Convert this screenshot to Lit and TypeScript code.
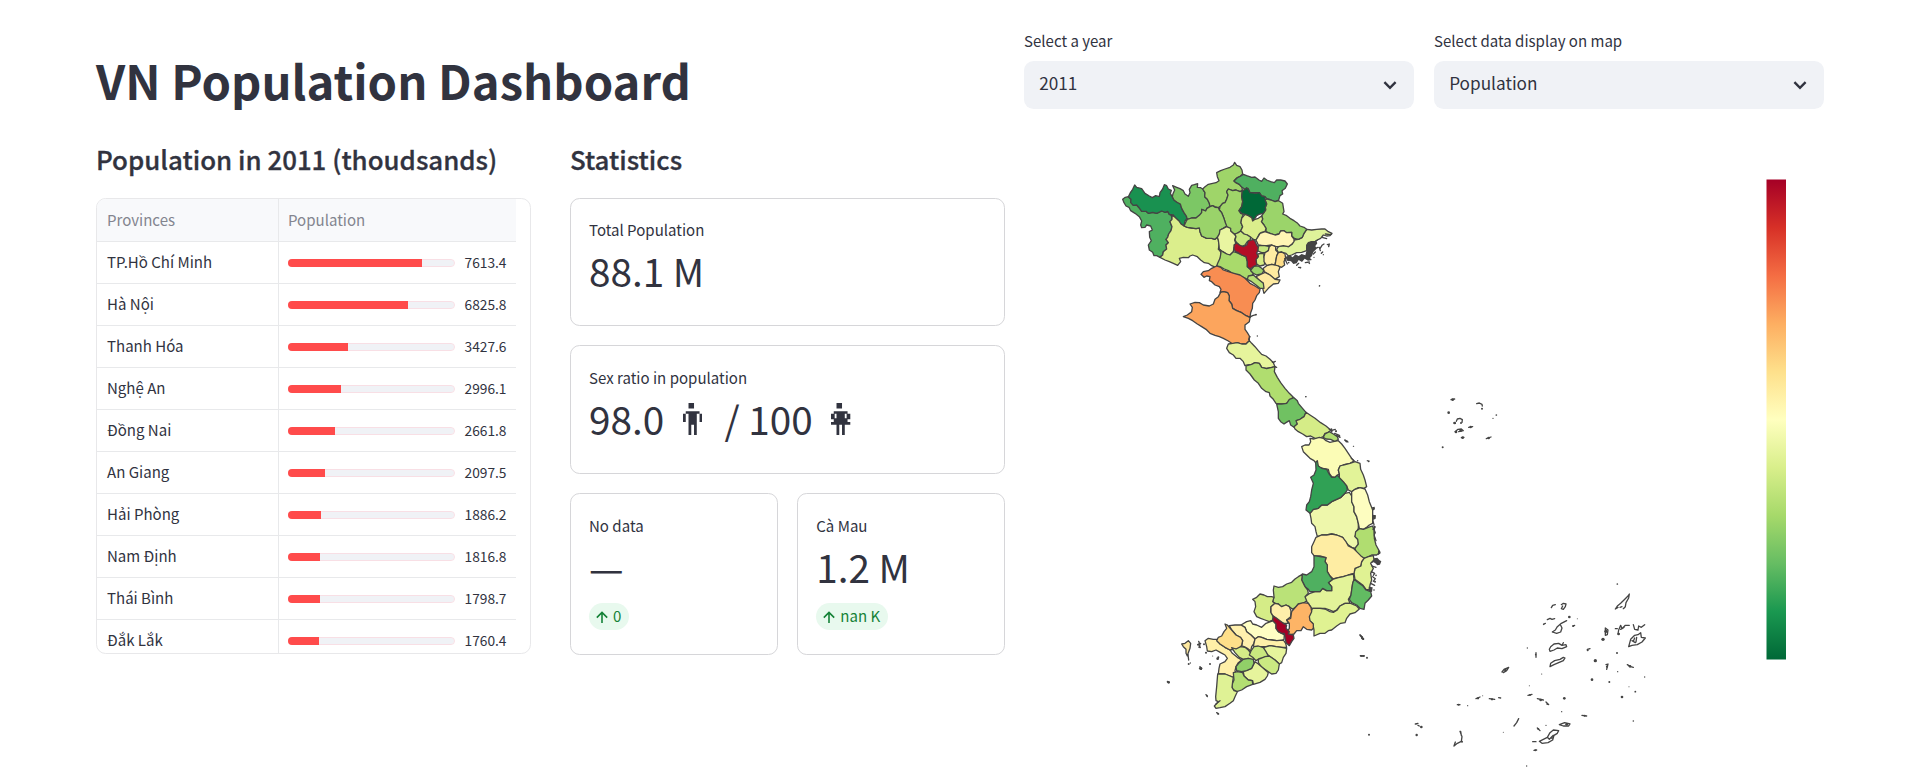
import { LitElement, html, css, svg } from "lit";
import { customElement, property } from "lit/decorators.js";

const PROVINCES: [string, number][] = [
  ["TP.Hồ Chí Minh", 7613.4],
  ["Hà Nội", 6825.8],
  ["Thanh Hóa", 3427.6],
  ["Nghệ An", 2996.1],
  ["Đồng Nai", 2661.8],
  ["An Giang", 2097.5],
  ["Hải Phòng", 1886.2],
  ["Nam Định", 1816.8],
  ["Thái Bình", 1798.7],
  ["Đắk Lắk", 1760.4],
];
const SCALE_MAX = 9500;

type Shape = [fill: string, points: string];
interface Sheet {
  x: number;
  y: number;
  shapes: Shape[];
  lines?: string;
  dots?: [number, number, number][];
  solid?: string;
}

/* Each sheet is drawn at three units per pixel from its own origin. */
const SHEETS: Sheet[] = [
  {
    x: 1110,
    y: 150,
    shapes: [
      ["#dff29a", "582,250 590,238 605,240 620,238 635,237 645,237 655,245 666,250 660,257 650,258 640,255 632,265 622,270 615,275 605,275 595,280 590,290 590,302 575,307 560,308 545,315 535,318 528,310 515,306 505,308 500,298 505,290 520,287 535,290 547,282 552,270 565,268 577,262"],
      ["#4fb060", "38,148 46,142 55,140 63,148 62,157 70,166 80,165 88,174 95,184 108,184 115,190 128,187 140,190 155,183 166,187 173,184 178,193 184,196 186,208 180,215 186,230 183,242 176,252 173,262 168,268 175,278 168,285 170,297 160,305 158,315 150,322 140,317 132,317 128,307 118,300 115,285 124,272 119,262 118,245 127,240 122,228 110,225 105,232 95,233 92,225 95,213 88,200 75,190 62,182 57,172 48,168 42,158"],
      ["#199150", "74,105 80,112 95,116 105,130 118,138 127,143 137,137 148,140 150,128 158,117 163,104 170,107 175,117 184,121 181,131 187,140 192,150 200,156 211,162 215,175 222,188 229,198 231,205 225,213 222,228 213,222 207,213 198,206 190,195 178,193 173,184 166,187 155,183 140,190 128,187 115,190 108,184 95,184 88,174 80,165 70,166 62,157 63,148 55,140 61,128 68,118"],
      ["#dbee8c", "186,196 195,202 207,213 213,222 222,228 232,232 245,234 258,236 268,234 270,245 275,258 290,265 305,265 315,268 322,262 325,270 327,285 325,298 333,305 332,320 328,335 323,345 317,352 305,347 295,340 283,338 272,330 262,320 248,315 240,318 235,323 220,322 208,325 212,335 203,346 190,340 178,335 165,330 150,322 158,315 160,305 170,297 168,285 175,278 168,268 173,262 176,252 183,242 186,230 180,215 186,208"],
      ["#7cc765", "188,107 200,112 210,116 220,122 225,132 235,139 240,128 238,118 245,106 253,104 263,101 262,112 272,113 278,117 285,128 284,140 292,148 298,160 300,170 291,175 287,183 275,178 275,188 268,196 258,204 245,204 232,208 229,198 222,188 215,175 211,162 200,156 192,150 187,140 189,131 194,120"],
      ["#9fd569", "278,117 285,110 295,103 308,100 318,98 327,92 322,80 320,68 332,62 345,57 360,52 370,45 374,37 380,46 390,50 396,60 398,72 390,80 380,84 372,93 378,98 388,103 396,112 397,122 390,125 378,120 368,122 355,117 350,125 354,135 350,148 345,158 338,160 330,170 325,173 315,170 308,167 300,170 298,160 292,148 284,140 285,128"],
      ["#4fb060", "372,93 382,83 390,79 400,73 410,77 425,82 435,81 447,90 455,94 462,84 470,90 482,95 493,98 500,90 512,90 525,93 532,102 526,115 516,122 518,132 510,137 506,150 495,155 483,150 472,147 465,140 455,138 448,128 438,128 420,128 414,115 405,118 396,112 388,103 378,98"],
      ["#9fd569", "355,117 368,122 378,120 390,125 397,122 395,140 398,155 395,170 387,182 392,190 400,193 395,205 393,218 398,230 392,243 382,250 372,252 362,243 358,235 348,230 345,215 340,200 335,188 328,180 330,170 338,160 345,158 350,148 354,135 350,125"],
      ["#9ad36a", "300,170 308,167 315,172 325,173 328,180 335,188 340,200 345,215 350,228 340,235 330,240 328,252 322,262 315,268 305,265 290,265 275,258 270,245 268,234 258,236 245,234 232,232 222,228 228,215 232,208 245,204 258,204 268,196 275,188 275,178 287,183 291,175"],
      ["#9bd46a", "465,150 472,147 483,150 495,155 506,152 518,160 520,172 522,185 518,192 530,197 540,205 552,212 563,220 570,228 582,232 590,238 582,250 577,262 565,268 553,265 545,258 545,247 530,248 522,242 512,243 507,252 495,255 480,250 468,245 468,235 462,225 454,215 458,207 455,198 460,190 467,180 466,172 470,162"],
      ["#006837", "397,122 405,118 410,113 416,120 420,128 438,130 448,128 455,138 465,140 466,152 470,162 466,172 467,180 460,190 450,192 440,197 435,205 428,213 425,203 415,197 405,193 395,190 387,182 395,170 398,155 395,140"],
      ["#e9f5a1", "350,230 362,235 362,243 372,252 378,258 374,270 378,282 372,292 370,305 360,315 350,312 338,305 328,298 327,285 325,270 322,262 328,252 330,240 340,235"],
      ["#dbee8c", "405,193 415,197 425,203 428,213 435,208 445,205 455,198 458,207 454,215 462,225 468,235 465,245 455,247 448,252 443,262 438,270 430,268 422,262 412,255 402,252 392,243 398,230 393,218 395,205"],
      ["#fff5b5", "438,270 443,262 450,250 465,245 480,250 495,255 507,252 512,243 522,242 530,248 545,247 545,258 552,267 552,275 545,283 535,290 520,287 505,290 497,290 485,285 470,287 455,287 445,285"],
      ["#a9da6b", "328,298 338,305 350,312 360,315 370,305 380,308 395,315 408,320 412,335 412,350 420,357 425,362 430,372 423,380 412,388 400,382 385,378 370,372 355,362 343,357 330,350 320,348 323,340 330,325 333,308"],
      ["#c9e87f", "375,252 385,248 392,243 402,252 412,255 422,262 420,272 412,275 405,285 395,290 388,285 380,278 375,270 378,260"],
      ["#c4e67d", "442,290 450,286 465,287 478,290 475,302 468,308 455,308 444,303"],
      ["#d5ec85", "443,312 455,310 462,312 462,322 467,332 462,345 450,348 440,342 438,328 445,320"],
      ["#feeda3", "478,290 485,285 497,290 497,300 505,308 500,318 497,335 495,345 485,343 470,347 462,335 462,320 465,308 475,302"],
      ["#fddd88", "505,308 515,306 525,312 527,325 522,335 524,345 515,352 505,348 495,345 497,335 500,318"],
      ["#feeaa0", "470,347 485,343 495,345 505,348 510,352 505,365 508,380 495,388 485,380 475,372 462,365 460,355"],
      ["#9ad36a", "425,357 432,348 445,348 455,355 462,362 455,372 440,375 430,370 422,362"],
      ["#feeaa0", "455,372 465,367 480,375 495,388 510,390 505,400 490,402 475,415 462,430 458,415 460,400 448,392 438,380"],
      ["#b7e075", "415,378 430,375 445,388 460,400 462,415 450,415 438,405 425,395 412,388"],
      ["#b30d26", "372,285 380,278 388,285 400,290 410,285 415,272 425,270 430,268 436,275 440,285 445,292 443,302 440,310 445,320 438,328 440,345 430,350 420,357 412,350 412,335 408,320 395,315 385,308 377,305 372,298"],
    ],
    solid:
      "M527,320L540,316 548,322 556,313 566,318 575,312 586,316 590,300 588,285 594,276 604,274 612,276 618,270 622,280 616,288 620,296 610,306 606,318 600,324 606,330 594,332 584,326 576,336 566,330 560,340 550,342 543,334 530,332Z",
    lines: "M630,296L636,286 642,282M634,310L638,306M652,284L658,282 656,290M646,252L662,254M636,262L650,266M560,346L566,340M586,338L598,336M524,326L532,342M566,352L572,353M628,292L631,302M614,296L624,292M610,312L616,306",
    dots: [[629, 407, 2], [640, 314, 2], [571, 353, 2.4], [656, 288, 2], [598, 340, 2.5], [536, 338, 2.5], [612, 322, 2], [622, 270, 2], [664, 252, 2.5]],
  },
  {
    x: 1160,
    y: 230,
    shapes: [
      ["#f88d52", "123,133 130,125 145,122 155,115 170,108 182,112 190,120 205,125 222,130 240,135 255,145 270,160 285,168 300,178 298,188 290,197 285,210 278,220 277,235 272,248 270,262 258,257 245,248 230,242 218,235 215,222 207,212 208,198 203,188 190,185 180,187 183,178 178,170 165,165 155,155 148,152 150,140 140,138 132,142"],
      ["#fca55d", "182,187 190,185 203,188 208,198 207,212 215,222 218,235 230,242 245,248 258,257 270,262 268,275 255,285 255,298 262,308 268,318 268,332 258,342 245,342 232,338 218,342 205,333 190,325 178,320 165,316 150,310 138,298 125,290 112,282 98,272 85,265 70,260 82,255 95,245 97,232 90,222 105,217 118,218 130,225 148,228 160,222 165,208 175,200"],
      ["#e6f49c", "205,342 218,340 232,338 245,342 258,342 268,332 275,340 285,350 295,362 305,373 318,378 330,388 340,398 345,410 335,412 318,415 305,412 298,400 285,398 275,403 262,405 255,407 250,395 240,385 228,385 220,375 208,368 200,355"],
      ["#b0dd6f", "258,408 275,403 285,398 298,400 305,412 320,416 345,410 343,425 352,442 362,458 375,475 388,490 400,502 390,510 385,518 372,522 360,522 348,520 340,508 330,498 328,488 318,485 305,475 295,460 283,450 270,432 258,420"],
      ["#70c162", "350,522 365,522 380,520 388,508 402,503 412,512 415,520 425,532 438,547 432,560 420,568 410,572 412,582 402,592 392,585 388,572 378,578 372,582 362,575 355,565 355,545"],
      ["#d5ec87", "438,547 450,555 465,565 482,578 498,588 512,600 505,608 495,610 490,620 478,625 465,625 452,618 440,620 428,612 415,605 405,597 402,590 412,582 408,572 420,568 432,560"],
      ["#b0dd70", "495,612 508,605 520,612 532,620 535,628 525,635 512,628 498,627 490,622"],
    ],
    lines: "M268,262L278,257 288,254M270,320L266,328M340,398L346,394M344,410L350,412M508,598L516,602M530,616L540,622",
    dots: [[478, 168, 2], [292, 318, 2.2], [288, 254, 2.5], [437, 500, 2], [528, 603, 2], [515, 605, 2.5], [560, 634, 3.5], [556, 631, 2.5], [538, 618, 3], [580, 649, 1.6], [338, 396, 3]],
  },
  {
    x: 1240,
    y: 390,
    shapes: [
      ["#fbfcb6", "210,145 222,147 238,142 250,145 258,152 270,157 280,155 295,152 305,162 315,175 325,190 335,205 342,213 330,220 310,225 300,228 295,240 298,252 285,262 275,260 268,250 265,238 250,235 238,232 230,222 222,212 210,205 200,195 190,185 185,170 195,165 207,165 212,155"],
      ["#e2f398", "300,228 310,225 330,220 345,215 360,220 362,238 370,255 375,270 380,290 372,295 355,293 345,298 335,305 325,300 320,288 308,275 298,265 298,252 295,240"],
      ["#eef7ab", "210,370 220,358 235,355 245,345 262,345 275,335 290,328 303,322 315,310 328,307 335,318 335,335 342,350 342,365 350,380 355,400 355,415 350,425 345,440 355,450 355,465 345,475 335,472 325,465 315,455 308,442 290,435 275,432 260,435 245,435 232,440 228,425 225,410 215,400 213,385"],
      ["#30a155", "227,217 232,212 235,228 245,235 260,238 266,250 275,262 285,262 292,255 300,265 310,275 320,288 322,300 315,310 303,322 290,328 275,335 262,345 245,345 235,355 220,358 210,370 198,360 200,345 208,335 212,320 215,300 220,280 212,262 222,255 228,240"],
      ["#fdfdc0", "335,305 345,298 360,293 375,297 383,315 388,335 392,345 398,360 398,380 398,400 388,405 380,412 370,418 358,415 355,400 350,380 342,365 342,350 335,335 335,318"],
      ["#b0dd70", "347,425 358,416 370,418 385,412 397,408 403,420 403,445 408,465 420,487 410,495 395,495 380,503 370,505 360,498 348,485 345,475 355,462 353,448 345,440"],
      ["#e0f293", "372,505 385,500 400,497 402,510 392,520 400,535 392,550 395,570 390,585 388,600 378,598 368,585 355,575 345,568 342,550 345,535 362,528 365,515"],
      ["#feeda3", "228,442 245,435 260,435 275,432 290,435 308,442 318,455 325,468 340,475 350,485 362,497 372,505 365,515 362,528 345,535 342,550 325,555 310,560 295,563 280,567 270,558 262,545 262,525 255,515 258,503 240,498 222,497 215,488 215,470 222,455"],
      ["#e3f399", "340,552 342,568 338,580 335,600 333,615 325,628 330,640 315,640 300,648 290,660 280,665 270,660 255,655 240,655 225,655 215,655 205,640 193,628 195,620 210,610 225,605 240,605 248,595 260,602 275,602 275,590 265,578 280,567 295,563 310,560 325,555"],
      ["#4fb060", "222,497 240,500 258,503 255,515 262,525 262,545 270,558 278,568 265,578 275,590 275,602 260,602 248,595 240,605 225,605 210,605 205,598 195,590 185,570 187,552 200,555 215,545 222,530 222,512"],
      ["#62bb62", "342,568 355,578 368,587 378,600 392,605 395,618 385,630 375,640 372,658 360,655 350,645 335,638 328,628 333,615 335,600 338,580"],
      ["#e0f292", "218,655 240,655 255,657 270,665 280,667 292,660 300,648 315,640 332,640 350,648 358,657 345,668 330,672 320,685 315,698 302,700 290,708 275,720 265,722 255,730 240,730 222,738 222,720 218,700 205,690 208,675"],
      ["#bae278", "100,600 102,588 115,592 128,590 140,582 155,577 165,567 175,560 187,553 185,570 195,590 203,600 205,610 195,620 200,632 190,640 175,642 168,650 158,658 148,650 138,645 125,650 115,642 105,640 98,635 102,620"],
      ["#d5ec87", "38,628 50,622 60,612 72,615 82,620 95,620 102,622 98,635 105,640 93,650 92,665 100,680 98,690 88,695 75,690 62,685 50,680 42,665 47,650 45,635"],
      ["#feefaa", "93,650 105,640 115,642 125,650 138,645 148,650 153,662 152,680 140,690 145,700 132,700 118,695 108,685 100,680 93,668"],
      ["#fdb466", "175,642 190,638 205,640 213,652 215,665 208,680 210,692 220,702 220,715 215,720 200,718 190,710 183,722 170,722 162,732 150,735 138,730 148,715 148,700 140,690 152,685 155,665"],
    ],
    solid:
      "M402,505L412,503 418,510 424,514 420,524 412,526 406,520 400,516Z M396,352L404,350 405,358 398,362Z M398,374L408,376 407,386 399,390Z M400,404L408,410 404,418 408,428 401,440Z M386,590L398,592 396,606 386,604Z M414,480L422,490 414,496Z",
    lines: "M398,390L402,404M404,440L408,452M396,528L408,532M394,545L404,550 400,556M398,560L406,566 400,574M392,580L404,586M398,516L404,508M272,122L286,118M284,130L298,136M314,150L324,156M334,205L342,212",
    dots: [[198, 20, 2], [386, 214, 3], [382, 212, 2], [341, 169, 1.5], [400, 418, 3], [405, 575, 3], [408, 556, 2.5], [366, 741, 3], [369, 746, 3], [288, 124, 3], [274, 118, 3], [402, 600, 2.5], [353, 212, 2.2]],
  },
  {
    x: 1150,
    y: 550,
    shapes: [
      ["#fefec4", "273,225 290,215 302,212 308,222 320,225 335,232 348,220 362,215 370,212 378,222 378,235 385,245 395,250 403,255 402,268 395,275 380,272 365,270 350,268 335,262 325,260 315,267 303,255 290,245 285,232"],
      ["#fff0ae", "238,227 255,225 273,225 285,232 290,245 303,255 315,267 312,280 305,290 302,303 292,295 282,290 275,288 278,272 270,262 258,255 245,240"],
      ["#fff0a8", "165,272 175,265 190,268 203,268 210,282 225,292 240,300 247,310 262,322 275,330 265,338 258,350 255,362 258,372 250,382 240,378 225,372 205,372 207,355 210,342 225,335 232,325 225,315 212,308 198,300 185,305 172,303 170,290"],
      ["#fedf8a", "225,222 232,225 245,240 258,255 272,262 278,272 275,285 268,297 255,297 240,300 225,292 210,282 200,272 205,262 215,258 222,245 230,235"],
      ["#fef0a9", "315,267 325,260 335,262 350,268 365,270 380,272 400,270 407,280 410,292 395,292 378,290 362,287 348,290 335,290 320,292 310,288"],
      ["#e6f49c", "340,293 360,287 378,290 395,292 410,295 408,310 400,322 395,338 388,342 375,330 360,320 348,310"],
      ["#d5ec87", "245,293 258,297 272,290 285,292 295,300 303,310 315,325 308,330 295,325 280,328 268,322 255,308"],
      ["#c9e87f", "303,303 312,290 325,288 340,293 348,305 355,318 345,325 330,325 318,332 308,322 298,315"],
      ["#cbe982", "325,328 345,320 358,318 375,330 388,342 385,360 378,370 365,372 350,362 335,352 325,338"],
      ["#e6f49c", "280,365 292,360 305,355 315,335 325,342 340,355 355,368 352,378 345,388 330,397 310,403 308,392 295,390 282,378"],
      ["#91d068", "258,350 268,338 280,328 295,325 310,328 312,340 305,355 290,362 275,365 260,362"],
      ["#b3de72", "250,368 262,365 278,368 282,378 295,390 307,392 308,403 290,410 275,420 260,425 248,418 245,405 252,390"],
      ["#dff295", "203,372 225,372 240,378 250,382 248,395 246,412 252,422 262,425 255,440 250,452 240,460 225,470 210,473 198,475 193,468 205,455 198,452 197,440 200,410"],
      ["#a50026", "370,198 380,205 390,212 400,220 410,225 408,235 418,245 415,252 430,255 432,265 425,275 418,287 408,278 405,260 403,250 395,250 385,245 378,235 378,222 368,212"],
      ["#fee9a0", "95,282 105,280 115,272 122,280 120,295 115,308 112,318 108,310 108,298 100,290"],
    ],
    lines: "M114,314L116,330M146,274L150,284 147,292M143,284L152,280M630,256L640,268M632,318L642,318M198,462L210,452M150,350L154,358M168,434L172,440M200,488L206,492",
    dots: [[56, 397, 4], [53, 395, 3], [116, 342, 3], [121, 339, 2], [152, 355, 5], [180, 342, 3], [168, 308, 3], [188, 318, 1.6], [203, 326, 4], [205, 322, 3], [171, 437, 2.4], [204, 491, 3], [640, 267, 3], [633, 257, 2], [634, 318, 2], [642, 317, 2], [651, 323, 2.4], [162, 283, 3], [145, 284, 3], [150, 292, 3]],
  },
  {
    x: 1350,
    y: 570,
    shapes: [],
    lines:
      "M796,117L802,108 812,100 822,90 834,78 838,72 836,84 828,98 826,110 820,116M796,117L804,112M810,112L816,110M604,113L608,106 616,104M634,104L640,100 648,102 646,110 640,118 634,116 638,108M592,149L600,145 606,148 614,146M607,186L616,180 622,170 634,160 650,152M607,186L620,190 632,186 636,174 632,166M598,238L602,230 612,222 626,220 636,226 648,224 650,230 636,236 622,234 612,240 600,244ZM636,226L640,218M600,290L602,280 614,272 630,268 640,262 645,264 640,272 626,278 612,284ZM456,306L462,298 476,292 470,302 460,308M766,174L774,180 772,194 766,196ZM796,176L802,176M804,192L806,180 812,166 816,176 826,166 838,166M812,178L822,172M850,164L854,178 864,180 866,168 874,172 884,164M836,230L842,208 854,196 864,194 872,188 874,202 886,204 876,216 862,224 846,226ZM854,204L850,214M860,202L858,216M846,212L856,218M712,238L720,236M768,284L774,282 770,298M832,284L842,290 850,292M322,404L330,404M418,386L434,388M446,383L452,384M534,376L546,373M562,386L580,390M588,396L596,404M696,436L710,438M492,468L500,458 506,446M312,528L316,516M312,528L322,520 334,514 336,500 330,484M332,484L334,496M568,514L580,508 592,502 600,488 610,480 626,482 622,490 612,496 608,510 594,518 576,520ZM592,502L598,508 610,496M628,464L644,458 660,462 656,468 640,468ZM562,474L570,482M548,515L558,515M552,541L560,540M196,462L204,460M204,466L208,468M30,194L40,206M31,257L42,258M558,248L558,262M582,162L586,160M668,168L674,166M378,386L390,381",
    dots: [[802, 42, 2.5], [658, 141, 4], [682, 146, 1.5], [581, 163, 2.5], [670, 168, 3], [532, 234, 2], [557, 254, 2.4], [575, 312, 1.8], [538, 347, 1.6], [759, 208, 5], [768, 184, 5], [801, 249, 3], [736, 272, 5], [771, 290, 3.4], [803, 305, 2], [840, 289, 4], [884, 321, 2], [726, 329, 4], [778, 336, 3], [837, 350, 1.6], [856, 365, 2.8], [816, 381, 4], [643, 385, 4], [635, 425, 2], [850, 453, 2.4], [588, 466, 2], [565, 477, 3], [556, 541, 3], [530, 588, 2], [460, 487, 1.5], [353, 407, 1.8], [326, 404, 3], [398, 377, 1.5], [384, 385, 3.5], [426, 388, 3.5], [57, 494, 3], [214, 471, 4], [200, 495, 3.6], [200, 461, 2], [36, 205, 3], [51, 264, 2.4], [713, 241, 3], [540, 375, 3], [572, 390, 4], [592, 402, 3], [704, 437, 3], [650, 463, 4], [606, 504, 3], [466, 300, 4], [336, 515, 3], [806, 192, 4]],
  },
  {
    x: 1420,
    y: 380,
    shapes: [],
    lines:
      "M93,59L104,57M170,71L178,69 186,73 187,78M102,129L106,130M109,124L112,117 120,115 127,119 126,127M105,155L114,148 124,147 130,152 116,155M146,142L158,140M199,176L213,171M124,173L132,172",
    dots: [[86, 98, 4], [186, 86, 3], [219, 115, 2], [229, 105, 2.5], [68, 202, 3], [104, 129, 4], [123, 129, 3], [108, 156, 4], [98, 59, 4], [206, 174, 4], [128, 173, 4], [152, 141, 3.6], [122, 152, 4]],
  },
];

const MAN = svg`<path d="M6 0h6v6h-6zM3 9h15v3h-15zM0 12h3v9h-3zM18 12h3v9h-3zM6 12h9v12h-9zM6 24h3v12h-3zM12 24h3v12h-3z"/>`;
const WOMAN = svg`<path d="M6 0h6v6h-6zM3 9h15v3h-15zM0 12h4v6h-4zM17 12h4v6h-4zM6 12h9v6h-9zM3 17h15v4h-15zM0 21h21v3h-21zM6 24h3v12h-3zM12 24h3v12h-3z"/>`;

@customElement("population-table")
class PopulationTable extends LitElement {
  static styles = css`
    :host { display: block; height: 454px; border: 1px solid #e8e8ea; border-radius: 9.6px; overflow: hidden; color: #31333f; }
    .grid { width: 419px; }
    .row { display: grid; grid-template-columns: 182px 1fr; height: 41px; border-bottom: 1px solid #e8e9eb; font-size: 15.04px; line-height: 40px; }
    .head { height: 42px; background: #f8f9fb; color: #83858f; line-height: 42px; }
    .name { padding-left: 10px; border-right: 1px solid #e8e9eb; white-space: nowrap; }
    .cell { padding-left: 9px; display: flex; align-items: center; }
    .track { width: 167px; height: 8px; box-sizing: border-box; border-radius: 4px; background: linear-gradient(#f0f2f6, #f0f2f6) padding-box; border: 1px solid #f8dfe5; position: relative; }
    .fill { position: absolute; left: -1px; top: -1px; height: 8px; background: #ff4b4b; border-radius: 4px 0 0 4px; }
    .num { width: 51.5px; text-align: right; font-size: 13.75px; line-height: 39px; }
  `;
  render() {
    return html`<div class="grid">
      <div class="row head"><div class="name">Provinces</div><div class="cell">Population</div></div>
      ${PROVINCES.map(
        ([name, value]) => html`<div class="row">
          <div class="name">${name}</div>
          <div class="cell">
            <div class="track"><div class="fill" style="width:${((value / SCALE_MAX) * 167).toFixed(1)}px"></div></div>
            <div class="num">${value.toFixed(1)}</div>
          </div>
        </div>`
      )}
    </div>`;
  }
}

@customElement("metric-card")
class MetricCard extends LitElement {
  @property() label = "";
  @property() delta = "";
  static styles = css`
    :host { display: block; box-sizing: border-box; border: 1px solid #d6d6d9; border-radius: 9.6px; padding: 20px 18px; color: #31333f; }
    .label { font-size: 15.04px; line-height: 24px; }
    .value { font-size: 38.7px; line-height: 56px; height: 56px; white-space: pre; }
    .pill { display: inline-flex; align-items: center; height: 27px; margin-top: 9px; padding: 0 8px 0 6px; border-radius: 14px; background: #e8f9ee; color: #158237; font-size: 15.04px; line-height: 25px; }
    .pill svg { margin-right: 4px; }
    .txt { height: 27px; }
  `;
  render() {
    return html`<div class="label">${this.label}</div>
      <div class="value"><slot></slot></div>
      ${this.delta
        ? html`<div class="pill">
            <svg width="14" height="14" viewBox="0 0 14 14" fill="none" stroke="#158237" stroke-width="1.6"><path d="M7 13V2.4M1.8 7.6L7 2.4l5.2 5.2" /></svg>
            <span class="txt">${this.delta}</span>
          </div>`
        : ""}`;
  }
}

@customElement("select-box")
class SelectBox extends LitElement {
  @property() label = "";
  @property() value = "";
  static styles = css`
    :host { display: block; color: #31333f; }
    .label { font-size: 15.04px; line-height: 24px; margin-bottom: 8px; }
    .box { display: flex; align-items: center; justify-content: space-between; height: 48px; border-radius: 9.6px; background: #f0f2f6; padding: 0 17.5px 0 15.2px; font-size: 17.2px; }
    .text { line-height: 24px; padding-bottom: 5px; }
  `;
  render() {
    return html`<div class="label">${this.label}</div>
      <div class="box">
        <span class="text">${this.value}</span>
        <svg width="14" height="10" viewBox="0 0 14 10" fill="none" stroke="#31333f" stroke-width="2.4"><path d="M1.4 2.2L7 7.8l5.6-5.6" /></svg>
      </div>`;
  }
}

@customElement("country-map")
class CountryMap extends LitElement {
  static styles = css`
    :host { display: block; }
    .map { display: block; }
    .land { stroke: #444; stroke-width: 3.9; stroke-linejoin: round; stroke-linecap: round; }
    .line { fill: none; }
    .solid { fill: #444; stroke: none; }
  `;
  render() {
    return html`<svg class="map" width="800" height="639" viewBox="1024 128 800 639">
      <defs>
        <linearGradient id="ramp" x1="0" y1="0" x2="0" y2="1">
          ${["#a50026", "#d73027", "#f46d43", "#fdae61", "#fee08b", "#ffffbf", "#d9ef8b", "#a6d96a", "#66bd63", "#1a9850", "#006837"].map(
            (c, i) => svg`<stop offset=${i / 10} stop-color=${c} />`
          )}
        </linearGradient>
      </defs>
      ${SHEETS.map(
        (s) => svg`<g class="land" transform="translate(${s.x} ${s.y}) scale(0.33333)">
          ${s.shapes.map(([fill, points]) => svg`<polygon fill=${fill} points=${points} />`)}
          ${s.lines ? svg`<path class="line" d=${s.lines} />` : ""}
          ${s.solid ? svg`<path class="solid" d=${s.solid} />` : ""}
          ${(s.dots ?? []).map(([x, y, r]) => svg`<circle class="solid" cx=${x} cy=${y} r=${r} />`)}
        </g>`
      )}
      <rect x="1766.5" y="179.5" width="19.5" height="480" fill="url(#ramp)" />
    </svg>`;
  }
}

@customElement("app-root")
class AppRoot extends LitElement {
  static styles = css`
    :host { display: block; width: 1920px; height: 767px; overflow: hidden; background: #fff; color: #31333f; font-family: "Noto Sans CJK JP", "Source Sans Pro", "Noto Sans", sans-serif; }
    .page { display: grid; grid-template-columns: 909px 800px; column-gap: 19px; padding-left: 96px; }
    .left { padding-top: 48px; }
    h1 { margin: 0; font-size: 47.2px; line-height: 63px; font-weight: 700; }
    .cols { display: grid; grid-template-columns: 435px 435px; column-gap: 39px; margin-top: 30px; }
    h3 { margin: 0 0 22px; font-size: 25.86px; line-height: 35px; font-weight: 500; -webkit-text-stroke: 0.3px #31333f; white-space: nowrap; }
    .stats { display: grid; gap: 19px; grid-template-rows: 128px 129px 162px; }
    .total { padding-top: 19px; }
    .pair { display: grid; grid-template-columns: 1fr 1fr; gap: 19.5px; }
    .selects { display: grid; grid-template-columns: 390px 390px; gap: 20px; padding-top: 29px; height: 99px; }
    .fig { fill: #31333f; }
    .man { margin: 0 22px 0 19px; }
    .woman { margin-left: 18.5px; }
  `;
  render() {
    return html`<div class="page">
      <div class="left">
        <h1>VN Population Dashboard</h1>
        <div class="cols">
          <section>
            <h3>Population in 2011 (thoudsands)</h3>
            <population-table></population-table>
          </section>
          <section>
            <h3>Statistics</h3>
            <div class="stats">
              <metric-card class="total" label="Total Population">88.1 M</metric-card>
              <metric-card label="Sex ratio in population">98.0<svg class="fig man" width="19.3" height="32.5" viewBox="0 0 21 36" preserveAspectRatio="none">${MAN}</svg>/ 100<svg class="fig woman" width="19.3" height="32.5" viewBox="0 0 21 36" preserveAspectRatio="none">${WOMAN}</svg></metric-card>
              <div class="pair">
                <metric-card label="No data" delta="0">—</metric-card>
                <metric-card label="Cà Mau" delta="nan K">1.2 M</metric-card>
              </div>
            </div>
          </section>
        </div>
      </div>
      <div>
        <div class="selects">
          <select-box label="Select a year" value="2011"></select-box>
          <select-box label="Select data display on map" value="Population"></select-box>
        </div>
        <country-map></country-map>
      </div>
    </div>`;
  }
}
